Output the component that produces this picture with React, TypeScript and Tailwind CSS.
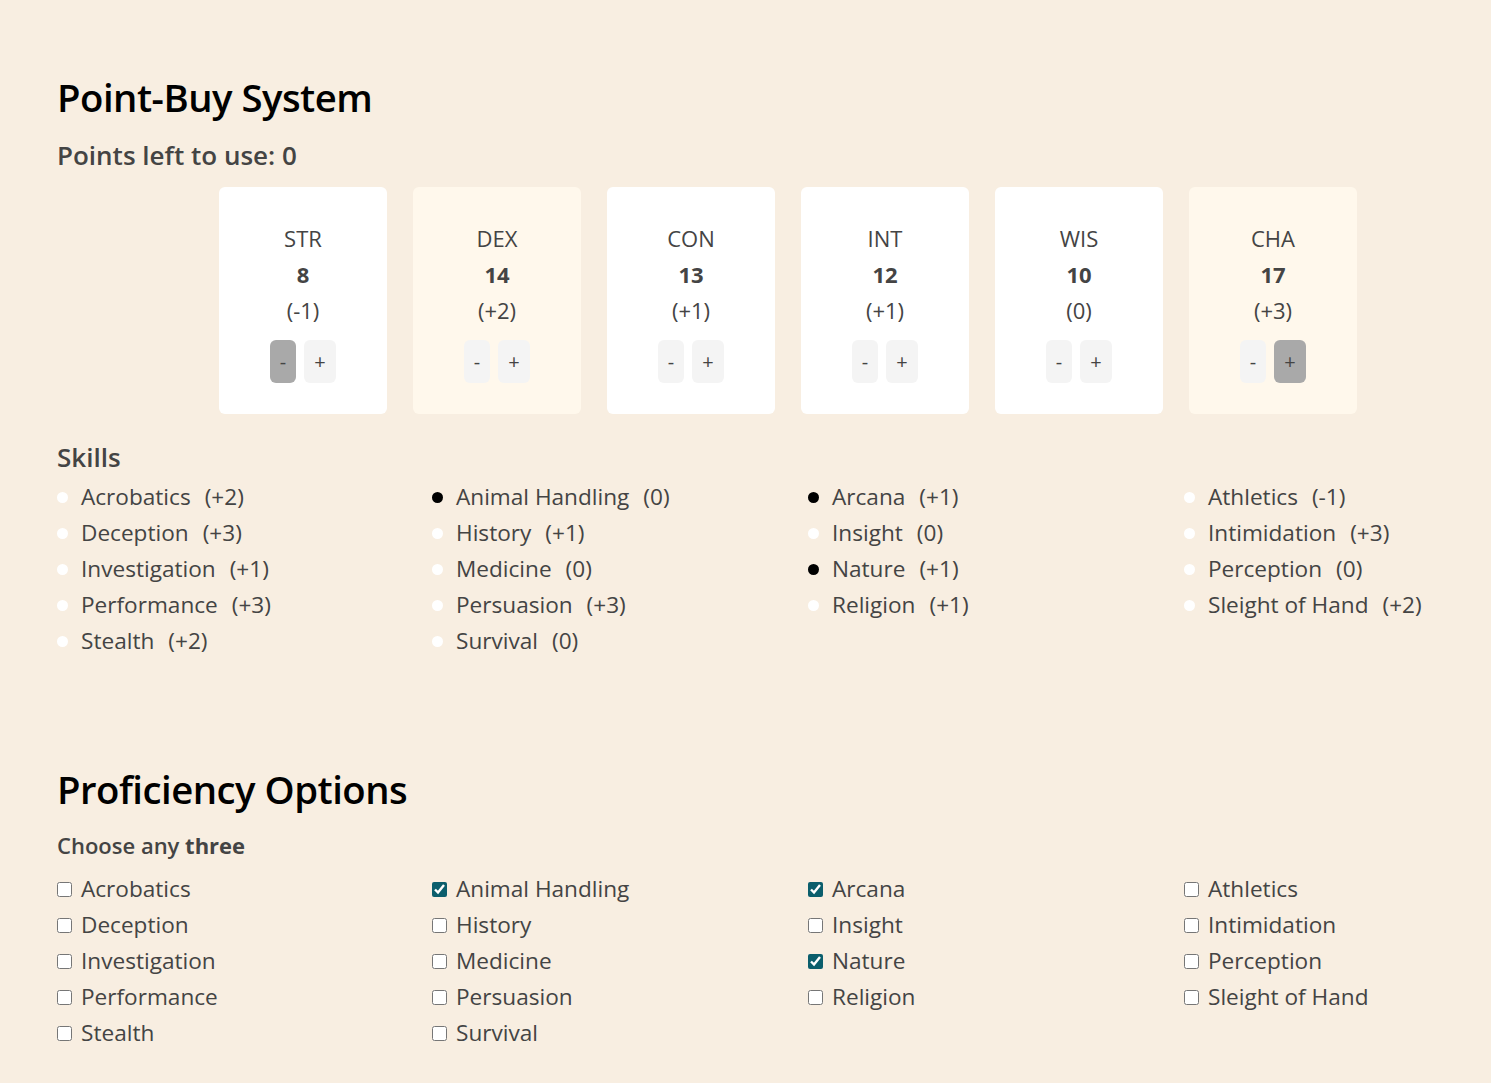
import { useState } from 'react';

const abilities = [
    { key: 'STR', score: 8, mod: '(-1)', bonus: false, minDisabled: true, maxDisabled: false },
    { key: 'DEX', score: 14, mod: '(+2)', bonus: true, minDisabled: false, maxDisabled: false },
    { key: 'CON', score: 13, mod: '(+1)', bonus: false, minDisabled: false, maxDisabled: false },
    { key: 'INT', score: 12, mod: '(+1)', bonus: false, minDisabled: false, maxDisabled: false },
    { key: 'WIS', score: 10, mod: '(0)', bonus: false, minDisabled: false, maxDisabled: false },
    { key: 'CHA', score: 17, mod: '(+3)', bonus: true, minDisabled: false, maxDisabled: true },
];

// column-major, like the reference
const skillColumns = [
    [
        ['Acrobatics', '(+2)'],
        ['Deception', '(+3)'],
        ['Investigation', '(+1)'],
        ['Performance', '(+3)'],
        ['Stealth', '(+2)'],
    ],
    [
        ['Animal Handling', '(0)'],
        ['History', '(+1)'],
        ['Medicine', '(0)'],
        ['Persuasion', '(+3)'],
        ['Survival', '(0)'],
    ],
    [
        ['Arcana', '(+1)'],
        ['Insight', '(0)'],
        ['Nature', '(+1)'],
        ['Religion', '(+1)'],
    ],
    [
        ['Athletics', '(-1)'],
        ['Intimidation', '(+3)'],
        ['Perception', '(0)'],
        ['Sleight of Hand', '(+2)'],
    ],
];

const font = { fontFamily: '"Open Sans", "Noto Sans", sans-serif' };

function AbilityCard({ a }: { a: (typeof abilities)[number] }) {
    return (
        <div
            className={`w-[168px] h-[227px] rounded-[6px] flex flex-col items-center pt-[33px] text-[#444] ${
                a.bonus ? 'bg-[#fff8ec]' : 'bg-white'
            }`}
        >
            <div className="text-[22px] leading-[36px]">{a.key}</div>
            <div className="text-[22px] leading-[36px] font-bold">{a.score}</div>
            <div className="text-[22px] leading-[36px]">{a.mod}</div>
            <div className="flex gap-[8px] mt-[12px]">
                <button
                    className={`w-[26px] h-[43px] rounded-[6px] text-[20px] text-[#444] ${
                        a.minDisabled ? 'bg-[#a9a9a9]' : 'bg-[#f4f4f4]'
                    }`}
                >
                    -
                </button>
                <button
                    className={`w-[32px] h-[43px] rounded-[6px] text-[20px] text-[#444] ${
                        a.maxDisabled ? 'bg-[#a9a9a9]' : 'bg-[#f4f4f4]'
                    }`}
                >
                    +
                </button>
            </div>
        </div>
    );
}

export default function App() {
    const [chosen, setChosen] = useState<string[]>(['Animal Handling', 'Arcana', 'Nature']);

    const toggle = (name: string) =>
        setChosen((c) => (c.includes(name) ? c.filter((n) => n !== name) : [...c, name]));

    return (
        <div className="min-h-screen bg-[#f8eee1] px-[57px] pt-[73px] pb-[30px] overflow-hidden" style={font}>
            <h1 className="text-[38.3px] leading-[48px] font-semibold text-black tracking-[-0.5px]">Point-Buy System</h1>
            <h3 className="mt-[18px] text-[26px] leading-[32px] font-semibold text-[#444]">Points left to use: 0</h3>

            <div className="mt-[16px] ml-[162px] flex gap-[26px]">
                {abilities.map((a) => (
                    <AbilityCard key={a.key} a={a} />
                ))}
            </div>

            <h3 className="mt-[27px] text-[26px] leading-[32px] font-semibold text-[#444]">Skills</h3>
            <div className="mt-[6px] grid grid-cols-[375px_376px_376px_1fr]">
                {skillColumns.map((col, i) => (
                    <ul key={i} className="flex flex-col">
                        {col.map(([name, mod]) => (
                            <li key={name} className="flex items-center h-[36px] text-[22.6px] text-[#444]">
                                <span
                                    className={`shrink-0 w-[11px] h-[11px] rounded-full mr-[13px] ${
                                        chosen.includes(name) ? 'bg-black' : 'bg-white'
                                    }`}
                                />
                                <span>{name}</span>
                                <span className="ml-[14px]">{mod}</span>
                            </li>
                        ))}
                    </ul>
                ))}
            </div>

            <h1 className="mt-[106px] text-[38.3px] leading-[48px] font-semibold text-black tracking-[-0.5px]">
                Proficiency Options
            </h1>
            <p className="mt-[17px] text-[22px] leading-[30px] font-semibold text-[#444]">
                Choose any <b className="font-bold">three</b>
            </p>
            <div className="mt-[11px] grid grid-cols-[375px_376px_376px_1fr]">
                {skillColumns.map((col, i) => (
                    <div key={i} className="flex flex-col">
                        {col.map(([name]) => (
                            <label key={name} className="flex items-center h-[36px] text-[22.6px] text-[#444]">
                                <input
                                    type="checkbox"
                                    checked={chosen.includes(name)}
                                    onChange={() => toggle(name)}
                                    className="w-[15px] h-[15px] m-0 mr-[9px] accent-[#0b5e6c]"
                                />
                                {name}
                            </label>
                        ))}
                    </div>
                ))}
            </div>
        </div>
    );
}
